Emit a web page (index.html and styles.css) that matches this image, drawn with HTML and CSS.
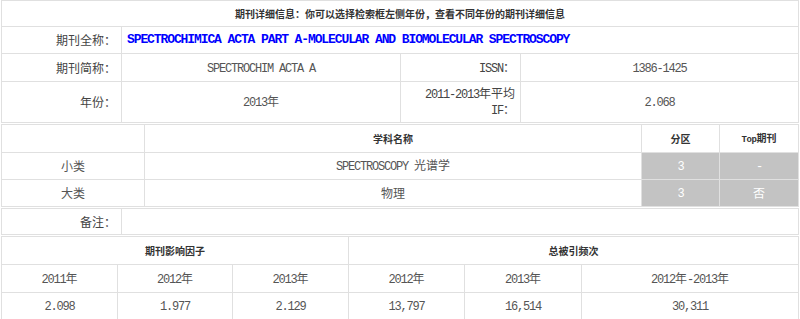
FILE: index.html
```html
<!DOCTYPE html>
<html lang="zh-CN">
<head>
<meta charset="utf-8">
<title>期刊详细信息</title>
<link rel="stylesheet" href="styles.css">
</head>
<body>
<div class="page">
  <table class="t">
    <colgroup><col class="w120"><col class="w279"><col class="w120"><col></colgroup>
    <tr class="h26"><th colspan="4">期刊详细信息：你可以选择检索框左侧年份，查看不同年份的期刊详细信息</th></tr>
    <tr class="h27"><td class="lbl">期刊全称：</td><td colspan="3" class="title">SPECTROCHIMICA ACTA PART A-MOLECULAR AND BIOMOLECULAR SPECTROSCOPY</td></tr>
    <tr class="h28"><td class="lbl">期刊简称：</td><td class="val"><span class="m">SPECTROCHIM ACTA A</span></td><td class="lbl"><span class="m">ISSN</span>：</td><td class="val"><span class="m">1386-1425</span></td></tr>
    <tr class="h41"><td class="lbl">年份：</td><td class="val"><span class="m">2013</span>年</td><td class="lbl"><span class="m">2011-2013</span>年平均<br><span class="m">IF</span>：</td><td class="val"><span class="m">2.068</span></td></tr>
  </table>

  <table class="t">
    <colgroup><col class="w143"><col class="w497"><col class="w78"><col></colgroup>
    <tr class="h28"><th></th><th>学科名称</th><th>分区</th><th><span class="mb">Top</span>期刊</th></tr>
    <tr class="h27"><td class="val">小类</td><td class="val"><span class="m">SPECTROSCOPY&nbsp;</span>光谱学</td><td class="gray"><span class="m">3</span></td><td class="gray"><span class="m">-</span></td></tr>
    <tr class="h27"><td class="val">大类</td><td class="val">物理</td><td class="gray"><span class="m">3</span></td><td class="gray">否</td></tr>
  </table>

  <table class="t">
    <colgroup><col class="w120"><col></colgroup>
    <tr class="h26"><td class="lbl">备注：</td><td></td></tr>
  </table>

  <table class="t">
    <colgroup><col class="w116"><col class="w115"><col class="w116"><col class="w116"><col class="w117"><col></colgroup>
    <tr class="h28"><th colspan="3">期刊影响因子</th><th colspan="3">总被引频次</th></tr>
    <tr class="h28"><td class="val"><span class="m">2011</span>年</td><td class="val"><span class="m">2012</span>年</td><td class="val"><span class="m">2013</span>年</td><td class="val"><span class="m">2012</span>年</td><td class="val"><span class="m">2013</span>年</td><td class="val"><span class="m">2012</span>年<span class="m">-2013</span>年</td></tr>
    <tr class="h27"><td class="val"><span class="m">2.098</span></td><td class="val"><span class="m">1.977</span></td><td class="val"><span class="m">2.129</span></td><td class="val"><span class="m">13,797</span></td><td class="val"><span class="m">16,514</span></td><td class="val"><span class="m">30,311</span></td></tr>
  </table>
</div>
</body>
</html>
```

FILE: styles.css
```css
html, body {
  margin: 0;
  padding: 0;
  background: #fff;
}
body {
  font-family: "Noto Sans CJK SC", "Noto Sans", sans-serif;
  font-size: 12px;
  color: #444;
}
.page {
  padding-left: 1px;
  width: 798px;
}
.t {
  width: 798px;
  border-collapse: collapse;
  table-layout: fixed;
  margin-bottom: 1px;
}
.t th, .t td {
  border: 1px solid #e0e0e0;
  padding: 0 5px;
  line-height: 14px;
  vertical-align: middle;
  overflow: hidden;
  white-space: nowrap;
}
.t th {
  font-size: 10px;
  font-weight: bold;
  color: #333;
  text-align: center;
}
.w116 { width: 116px; }
.w115 { width: 115px; }
.w117 { width: 117px; }
.w120 { width: 120px; }
.w279 { width: 279px; }
.w143 { width: 143px; }
.w497 { width: 497px; }
.w78 { width: 78px; }
.h26 { height: 26px; }
.h27 { height: 27px; }
.h28 { height: 28px; }
.h41 { height: 41px; }
.lbl {
  text-align: right;
  color: #444;
}
.val {
  text-align: center;
  color: #555;
}
.title {
  text-align: left;
  padding-left: 6px;
  font-family: "Liberation Mono", monospace;
  font-weight: bold;
  font-size: 13px;
  letter-spacing: -1.1px;
  color: #0000ff;
}
.m {
  font-family: "Liberation Mono", monospace;
  font-size: 12px;
  letter-spacing: -1.2px;
}
.mb {
  font-family: "Liberation Mono", monospace;
  font-size: 9px;
  letter-spacing: -0.4px;
}
.gray {
  background: #c3c3c3;
  color: #fff;
  text-align: center;
  border-color: #d9d9d9;
}
```
